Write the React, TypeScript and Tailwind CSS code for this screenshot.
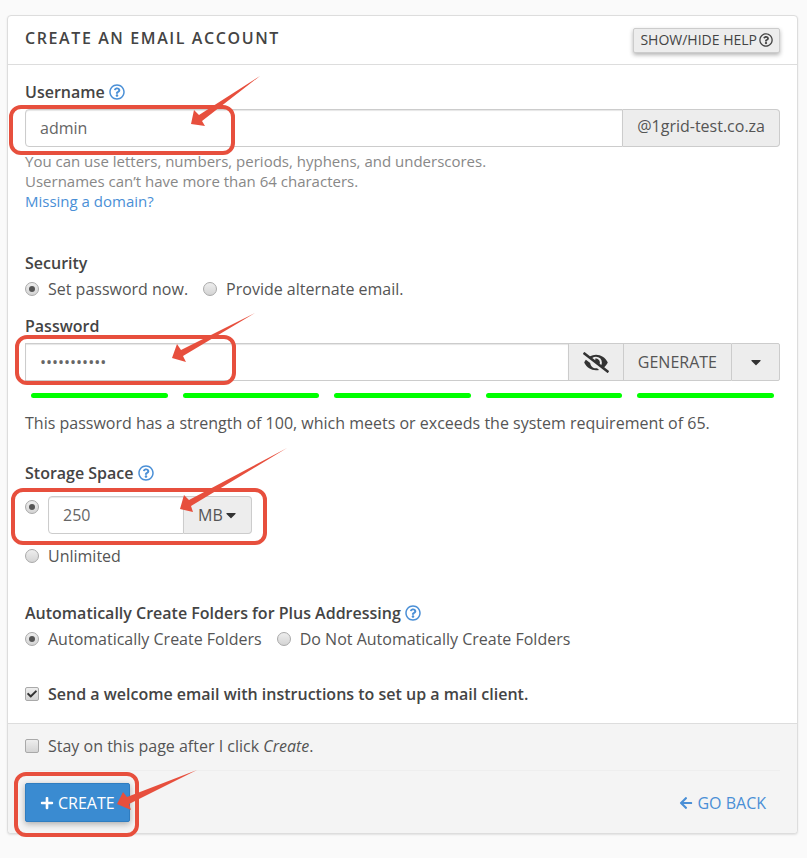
import type { ReactNode } from "react";
import { FaArrowLeft, FaCaretDown, FaCheck, FaEyeSlash, FaPlus, FaRegQuestionCircle } from "react-icons/fa";

const radioClass =
  "relative m-0 size-3.5 shrink-0 appearance-none rounded-full border border-[#a9a9a9] bg-linear-to-b from-[#eeeeee] to-[#d4d4d4] checked:before:absolute checked:before:inset-[3px] checked:before:rounded-full checked:before:bg-[#555555] checked:before:content-['']";

const fieldClass =
  "h-[38px] min-w-0 border border-[#cccccc] bg-white px-3.5 text-base text-[#666666] shadow-[inset_0_1px_1px_rgba(0,0,0,0.1)] outline-none";

function Radio({ name, label, checked }: { name: string; label: string; checked?: boolean }) {
  return (
    <label className="flex items-center gap-[9px]">
      <input type="radio" name={name} defaultChecked={checked} className={radioClass} />
      <span>{label}</span>
    </label>
  );
}

function Checkbox({ checked, children }: { checked?: boolean; children: ReactNode }) {
  return (
    <label className="flex items-center gap-[9px]">
      <span className="grid size-3.5 place-items-center">
        <input
          type="checkbox"
          defaultChecked={checked}
          className="peer col-start-1 row-start-1 m-0 size-3.5 appearance-none rounded-[2px] border border-[#a9a9a9] bg-linear-to-b from-[#eeeeee] to-[#d4d4d4]"
        />
        <FaCheck className="pointer-events-none z-10 col-start-1 row-start-1 hidden size-2.5 text-[#333333] peer-checked:block" />
      </span>
      <span>{children}</span>
    </label>
  );
}

function HelpButton({ label }: { label: string }) {
  return (
    <button type="button" aria-label={label} className="text-[#4a8fd6]">
      <FaRegQuestionCircle className="size-4" />
    </button>
  );
}

function Arrow({ className, viewBox, points }: { className: string; viewBox: string; points: string }) {
  return (
    <svg aria-hidden="true" viewBox={viewBox} className={`pointer-events-none absolute z-20 ${className}`}>
      <polygon points={points} fill="#e74f3d" />
    </svg>
  );
}

function Frame({ className }: { className: string }) {
  return (
    <span
      aria-hidden="true"
      className={`pointer-events-none absolute z-10 rounded-xl border-4 border-[#e74f3d] ${className}`}
    />
  );
}

export default function App() {
  return (
    <div className="min-h-screen bg-[#fafafa] pt-[15px] pr-[9px] pb-6 pl-[7px] font-['Open_Sans','Noto_Sans',sans-serif] text-base leading-6 text-[#555555]">
      <form
        className="rounded-[4px] border border-[#dddddd] bg-white shadow-[0_1px_2px_rgba(0,0,0,0.1)]"
        onSubmit={(e) => e.preventDefault()}
      >
        <header className="flex h-[49px] items-center justify-between border-b border-[#dddddd] px-[17px]">
          <h1 className="pb-1 text-base font-semibold tracking-widest text-[#444444]">CREATE AN EMAIL ACCOUNT</h1>
          <button
            type="button"
            className="flex h-[25px] items-center gap-0.5 rounded-[2px] border border-[#cccccc] bg-[#ededed] px-1.5 text-sm text-[#444444] shadow-[0_2px_4px_rgba(0,0,0,0.3)]"
          >
            SHOW/HIDE HELP <FaRegQuestionCircle className="size-3.5" />
          </button>
        </header>

        <div className="px-[17px] pt-[15px] pb-[17px]">
          <section>
            <div className="flex items-center gap-1">
              <label htmlFor="username" className="font-semibold text-[#444444]">Username</label>
              <HelpButton label="Help with username" />
            </div>
            <div className="relative mt-[5px] flex">
              <input id="username" type="text" defaultValue="admin" className={`${fieldClass} flex-1 rounded-l-[4px]`} />
              <span className="flex h-[38px] items-center rounded-r-[4px] border border-l-0 border-[#cccccc] bg-[#ededed] px-3.5 pb-1">
                @1grid-test.co.za
              </span>
              <Frame className="-top-1 -left-4 h-[50px] w-[226px]" />
              <Arrow
                className="-top-[33px] left-[166px] h-[51px] w-[70px]"
                viewBox="0 0 70 51"
                points="0,48 3,34 8,39 69,0 11,45 14,50"
              />
            </div>
            <div className="mt-1 text-[15px] leading-5 text-[#888888]">
              <p>You can use letters, numbers, periods, hyphens, and underscores.</p>
              <p>Usernames can’t have more than 64 characters.</p>
              <a href="#domains" className="text-[#4a8fd6]">Missing a domain?</a>
            </div>
          </section>

          <fieldset className="mt-10">
            <legend className="font-semibold text-[#444444]">Security</legend>
            <div className="mt-0.5 flex gap-[15px]">
              <Radio name="security" label="Set password now." checked />
              <Radio name="security" label="Provide alternate email." />
            </div>
          </fieldset>

          <section className="mt-[13px]">
            <label htmlFor="password" className="font-semibold text-[#444444]">Password</label>
            <div className="relative mt-[5px] flex">
              <input
                id="password"
                type="password"
                defaultValue="swordfish99"
                className={`${fieldClass} flex-1`}
              />
              <button type="button" aria-label="Show password" className="flex h-[38px] w-[55px] items-center justify-center border border-l-0 border-[#cccccc] bg-[#ededed] text-[#333333]">
                <FaEyeSlash className="h-[21px] w-[26px]" />
              </button>
              <button type="button" className="h-[38px] border-y border-[#cccccc] bg-[#ededed] px-3.5">
                GENERATE
              </button>
              <button type="button" aria-label="Password options" className="flex h-[38px] w-[49px] items-center justify-center rounded-r-[2px] border border-[#cccccc] bg-[#ededed] text-[#333333]">
                <FaCaretDown className="size-4" />
              </button>
              <Frame className="-top-2 -left-2.5 h-[50px] w-[221px]" />
              <Arrow
                className="-top-[30px] left-[147px] h-[51px] w-[84px]"
                viewBox="0 0 84 51"
                points="0,45 5,31 9,37 83,0 11,43 14,49"
              />
            </div>
            <div className="mt-3 grid grid-cols-5 gap-[15px] px-1.5">
              {[20, 40, 60, 80, 100].map((step) => (
                <span key={step} className="h-[5px] rounded-full bg-[#00ff00]" />
              ))}
            </div>
            <p className="mt-[13px]">
              This password has a strength of 100, which meets or exceeds the system requirement of 65.
            </p>
          </section>

          <section className="mt-[26px]">
            <div className="flex items-center gap-1">
              <h2 className="font-semibold text-[#444444]">Storage Space</h2>
              <HelpButton label="Help with storage space" />
            </div>
            <div className="relative mt-[11px] flex gap-[9px]">
              <input type="radio" name="quota" defaultChecked aria-label="Limited storage" className={`${radioClass} mt-1`} />
              <div className="flex">
                <input type="text" aria-label="Storage amount" defaultValue="250" className={`${fieldClass} w-[136px] rounded-l-[4px]`} />
                <div className="grid h-[38px] w-[68px] items-center rounded-r-[4px] border border-l-0 border-[#cccccc] bg-[#ededed]">
                  <select aria-label="Storage unit" className="col-start-1 row-start-1 h-9 w-full appearance-none pl-3.5 outline-none">
                    <option>MB</option>
                    <option>GB</option>
                    <option>TB</option>
                  </select>
                  <FaCaretDown className="pointer-events-none col-start-1 row-start-1 mr-3 size-4 justify-self-end text-[#333333]" />
                </div>
              </div>
              <Frame className="-top-2 -left-3.5 h-[57px] w-[256px]" />
              <Arrow
                className="-top-12 left-[155px] h-16 w-[107px]"
                viewBox="0 0 107 64"
                points="0,61 4,47 9,52 107,0 11,58 13,64"
              />
            </div>
            <div className="mt-2.5">
              <Radio name="quota" label="Unlimited" />
            </div>
          </section>

          <section className="mt-[33px]">
            <div className="flex items-center gap-1">
              <h2 className="font-semibold text-[#444444]">Automatically Create Folders for Plus Addressing</h2>
              <HelpButton label="Help with plus addressing" />
            </div>
            <div className="mt-0.5 flex gap-[15px]">
              <Radio name="folders" label="Automatically Create Folders" checked />
              <Radio name="folders" label="Do Not Automatically Create Folders" />
            </div>
          </section>

          <div className="mt-[31px] font-semibold text-[#444444]">
            <Checkbox checked>Send a welcome email with instructions to set up a mail client.</Checkbox>
          </div>
        </div>

        <footer className="rounded-b-[4px] border-t border-[#dddddd] bg-[#f4f4f4] px-[17px] pt-2.5 pb-[11px]">
          <Checkbox>
            Stay on this page after I click <em>Create</em>.
          </Checkbox>
          <hr className="mt-3 border-[#eeeeee]" />
          <div className="relative mt-3 flex items-center justify-between">
            <button
              type="submit"
              className="flex h-[39px] items-center gap-1 rounded-[2px] border border-[#2f7dc0] bg-[#3a8bd1] px-3.5 text-white shadow-[0_2px_6px_rgba(0,0,0,0.3)]"
            >
              <FaPlus className="size-3.5" /> CREATE
            </button>
            <a href="#back" className="flex items-center gap-1 pr-3.5 text-[#4a8fd6]">
              <FaArrowLeft className="size-3.5" /> GO BACK
            </a>
            <Frame className="-top-[11px] -left-[11px] h-[65px] w-[125px]" />
            <Arrow
              className="-top-[13px] left-[92px] h-10 w-20"
              viewBox="0 0 80 40"
              points="0,34 6,22 10,27 80,0 12,34 14,40"
            />
          </div>
        </footer>
      </form>
    </div>
  );
}
